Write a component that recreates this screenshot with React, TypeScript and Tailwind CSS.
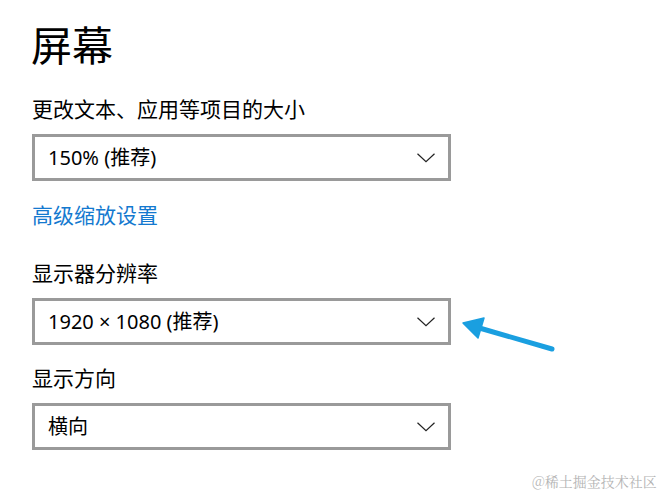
import React from "react";

const font = { fontFamily: '"Noto Sans", "Noto Sans CJK SC", sans-serif' };

function Chevron() {
  return (
    <svg width="18" height="10" viewBox="0 0 18 10" className="shrink-0">
      <path d="M0.5 0.8 L9 8.8 L17.5 0.8" fill="none" stroke="#222" strokeWidth="1.2" />
    </svg>
  );
}

function Select({ value }: { value: string }) {
  return (
    <div className="w-[419px] h-[47px] border-[3px] border-[#9a9a9a] bg-white flex items-center justify-between pl-[13px] pr-[13px]">
      <span className="text-[20px] text-black leading-none">{value}</span>
      <Chevron />
    </div>
  );
}

export default function App() {
  return (
    <div
      className="relative w-[663px] h-[493px] overflow-hidden bg-white text-black"
      style={font}
    >
      <div className="flex flex-col pl-[32px]">
        <div className="h-[90px] flex items-center">
          <h1 className="text-[41px] leading-none font-normal -ml-[1px]">屏幕</h1>
        </div>
        <div className="h-[38px] flex items-center text-[21px] leading-none">
          更改文本、应用等项目的大小
        </div>
        <div className="mt-[6px]">
          <Select value="150% (推荐)" />
        </div>
        <div className="mt-[15px] h-[38px] flex items-center text-[21px] leading-none text-[#1479cf]">
          高级缩放设置
        </div>
        <div className="mt-[20px] h-[38px] flex items-center text-[21px] leading-none">
          显示器分辨率
        </div>
        <div className="mt-[6px]">
          <Select value="1920 × 1080 (推荐)" />
        </div>
        <div className="mt-[14px] h-[38px] flex items-center text-[21px] leading-none">
          显示方向
        </div>
        <div className="mt-[6px]">
          <Select value="横向" />
        </div>
      </div>

      <svg
        className="absolute left-0 top-0 pointer-events-none"
        width="663"
        height="493"
        viewBox="0 0 663 493"
      >
        <line x1="476" y1="327" x2="552" y2="349" stroke="#1a9fe0" strokeWidth="5" strokeLinecap="round" />
        <polygon points="463,323 484,318 478,338" fill="#1a9fe0" stroke="#1a9fe0" strokeWidth="1.5" strokeLinejoin="round" />
      </svg>

      <div
        className="absolute left-[532px] top-[471px] text-[14px] leading-[20px] text-[#b4b4b4] whitespace-nowrap"
        style={{ fontFamily: '"Noto Serif CJK SC", "Noto Sans CJK SC", serif' }}
      >
        @稀土掘金技术社区
      </div>
    </div>
  );
}
